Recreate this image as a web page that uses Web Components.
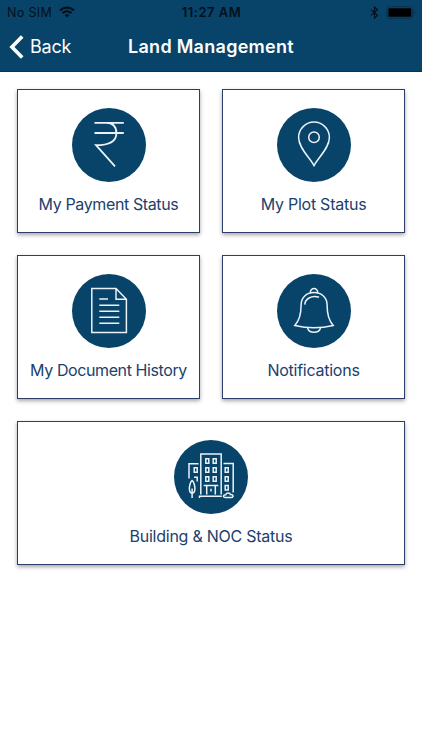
<!DOCTYPE html>
<html lang="en">
<head>
<meta charset="utf-8">
<meta name="viewport" content="width=device-width, initial-scale=1">
<title>Land Management</title>
<style>
    body { margin: 0; background: #fff; font-family: Inter, "Liberation Sans", sans-serif; }
</style>
</head>
<body>
<land-app>
    <status-bar slot="top" carrier="No SIM" time="11:27 AM"></status-bar>
    <nav-bar slot="top" back="Back">Land Management</nav-bar>
    <menu-card icon="rupee" style="--spacing: -0.38px">My Payment Status</menu-card>
    <menu-card icon="pin">My Plot Status</menu-card>
    <menu-card icon="document" style="--spacing: -0.4px">My Document History</menu-card>
    <menu-card icon="bell">Notifications</menu-card>
    <menu-card icon="building" wide>Building &amp; NOC Status</menu-card>
</land-app>

<script>
// 74x74 line icons, drawn inside the round badge
const ICONS = {
    rupee: `
        <path d="M22.5 14.8H51.8M22.5 25H51.8M34 14.8C41.5 14.8 44.4 19.5 44.4 25.2C44.4 34 35 37.2 24 37.2L43 58.3" stroke-width="1.8"/>`,
    pin: `
        <path d="M37 57.6C33 49.8 21.6 40 21.6 29.5A15.4 15.4 0 0 1 52.4 29.5C52.4 40 41 49.8 37 57.6Z"/>
        <circle cx="37" cy="29.3" r="5.3"/>`,
    document: `
        <path d="M19.8 14.4H44L54.4 25.2V58.4H19.8ZM44 14.4V25.2H54.4"/>
        <path d="M27.3 25H36M27.3 31.3H47.3M27.3 37.2H47.3M27.3 43.2H47.3M27.3 49.3H47.3"/>`,
    bell: `
        <path d="M33.3 19.3C32.8 12.9 41.2 12.9 40.7 19.3"/>
        <path d="M17.8 51.4C22 47 24.1 40 24.1 31C24.1 23.5 29.5 18.6 37 18.6S50.1 23.5 50.1 31C50.1 40 52 47 56.2 51.4C44 54.5 30 54.5 17.8 51.4Z"/>
        <path d="M27.8 30.6C28 25.3 34 20.8 42 23.2"/>
        <path d="M30.5 53.4C31.5 60 42.5 60 43.6 53.4"/>`,
    building: `
        <path d="M26.8 54.5V14.1H47.2V54.5M24.5 23.8H15V38.6M49.5 23.6H59.2V52.5M25.5 58V56.3H47.8"/>
        <path d="M31.8 18.8h3v4.4h-3zM39.2 18.8h3v4.4h-3zM31.8 27.8h3v4.4h-3zM39.2 27.8h3v4.4h-3zM31.8 36.8h3v4.4h-3zM39.2 36.8h3v4.4h-3z"/>
        <path d="M20.2 27.8h3v4.4h-3zM51.2 27.8h3v4.4h-3zM51.2 36.8h3v4.4h-3zM51.2 45.6h3v4.4h-3zM20 37.2H23.2V41.5"/>
        <path d="M29.7 45.4H44.3M32.7 45.4V54.5M41.3 45.4V54.5M37 48.8V51.4"/>
        <path d="M18.1 40.5C16.2 41.5 15.3 46.5 15.4 49C15.5 52 17 53.2 18.1 53.2S20.8 52 20.9 49C21 46.5 20 41.5 18.1 40.5ZM18.1 48.5V58"/>
        <path d="M51.3 57.4C48.7 57.4 49 54.6 51.7 54.7C52.5 52.4 56 52.6 56.4 54.6C59.7 54.3 59.7 57.4 57.5 57.4Z"/>`
};

class LandApp extends HTMLElement {
    constructor() {
        super();
        this.attachShadow({ mode: 'open' });
        this.shadowRoot.innerHTML = `
            <style>
                :host { display: block; min-height: 100vh; background: #fff; }
                header { background: #084469; height: 72px; box-sizing: border-box; border-bottom: 1px solid #063657; }
                main { display: grid; grid-template-columns: 1fr 1fr; grid-auto-rows: 144px; gap: 22.2px 22px; padding: 17px 17px 0; }
            </style>
            <header><slot name="top"></slot></header>
            <main><slot></slot></main>
        `;
    }
}
customElements.define('land-app', LandApp);

class StatusBar extends HTMLElement {
    connectedCallback() {
        this.attachShadow({ mode: 'open' });
        this.shadowRoot.innerHTML = `
            <style>
                :host { display: grid; grid-template-columns: 1fr auto 1fr; align-items: center; height: 24px; padding: 0 6px 0 7px; color: #03101a; font-size: 12.5px; line-height: 24px; }
                .left, .right { display: flex; align-items: center; }
                .left { gap: 7px; letter-spacing: 0.35px; }
                .left span, .time { padding-top: 1px; line-height: 23px; }
                .right { justify-content: flex-end; gap: 7px; }
                .time { font-size: 13px; font-weight: 600; letter-spacing: 0.5px; }
                svg { display: block; }
            </style>
            <div class="left">
                <span>${this.getAttribute('carrier')}</span>
                <svg width="16" height="12" viewBox="0 0 16 12" fill="none" stroke="#03101a" stroke-width="2.1">
                    <path d="M1 4.4C5 .7 11 .7 15 4.4M3.6 7.1C6.2 4.8 9.8 4.8 12.4 7.1"/>
                    <path d="M8 11.4L5.7 9.1C7 8 9 8 10.3 9.1Z" fill="#03101a" stroke="none"/>
                </svg>
            </div>
            <span class="time">${this.getAttribute('time')}</span>
            <div class="right">
                <svg width="9" height="13" viewBox="0 0 9 13" fill="none" stroke="#03101a" stroke-width="1.2">
                    <path d="M1 3.6L7.5 9.2L4.5 12V1L7.5 3.8L1 9.4"/>
                </svg>
                <svg width="30" height="13" viewBox="0 0 30 13">
                    <rect x=".8" y=".7" width="26" height="11.6" rx="2.6" fill="none" stroke="#06304b"/>
                    <rect x="2.4" y="2.3" width="22.8" height="8.4" rx="1" fill="#000"/>
                    <path d="M28 4.6C29.5 5.2 29.5 7.8 28 8.4Z" fill="#06304b"/>
                </svg>
            </div>
        `;
    }
}
customElements.define('status-bar', StatusBar);

class NavBar extends HTMLElement {
    connectedCallback() {
        this.attachShadow({ mode: 'open' });
        this.shadowRoot.innerHTML = `
            <style>
                :host { display: grid; grid-template-columns: 1fr auto 1fr; align-items: center; height: 45px; padding: 0 9px; color: #fff; }
                .back { display: flex; align-items: center; gap: 6px; font-size: 18px; letter-spacing: -0.25px; }
                .title { font-size: 18px; font-weight: 600; letter-spacing: 0.28px; }
                svg { display: block; }
            </style>
            <div class="back">
                <svg width="15" height="24" viewBox="0 0 15 24" fill="none" stroke="#fff" stroke-width="3.6">
                    <path d="M13.2 1.5L2.9 12L13.2 22.5"/>
                </svg>
                <span>${this.getAttribute('back')}</span>
            </div>
            <span class="title"><slot></slot></span>
        `;
    }
}
customElements.define('nav-bar', NavBar);

class MenuCard extends HTMLElement {
    connectedCallback() {
        this.attachShadow({ mode: 'open' });
        this.shadowRoot.innerHTML = `
            <style>
                :host { display: flex; flex-direction: column; align-items: center; box-sizing: border-box; padding-top: 18px; border: 1px solid #2d3c69; background: #fff; box-shadow: 0 2px 4px rgba(0, 0, 0, 0.35); color: #1b416c; }
                :host([wide]) { grid-column: 1 / -1; }
                svg { display: block; flex: none; width: 74px; height: 74px; border-radius: 50%; background: #084469; }
                .label { margin-top: 11px; font-size: 16px; line-height: 22px; letter-spacing: var(--spacing, -0.25px); white-space: nowrap; }
            </style>
            <svg viewBox="0 0 74 74" fill="none" stroke="#e9f2f8" stroke-width="1.5">${ICONS[this.getAttribute('icon')]}</svg>
            <div class="label"><slot></slot></div>
        `;
    }
}
customElements.define('menu-card', MenuCard);
</script>
</body>
</html>
